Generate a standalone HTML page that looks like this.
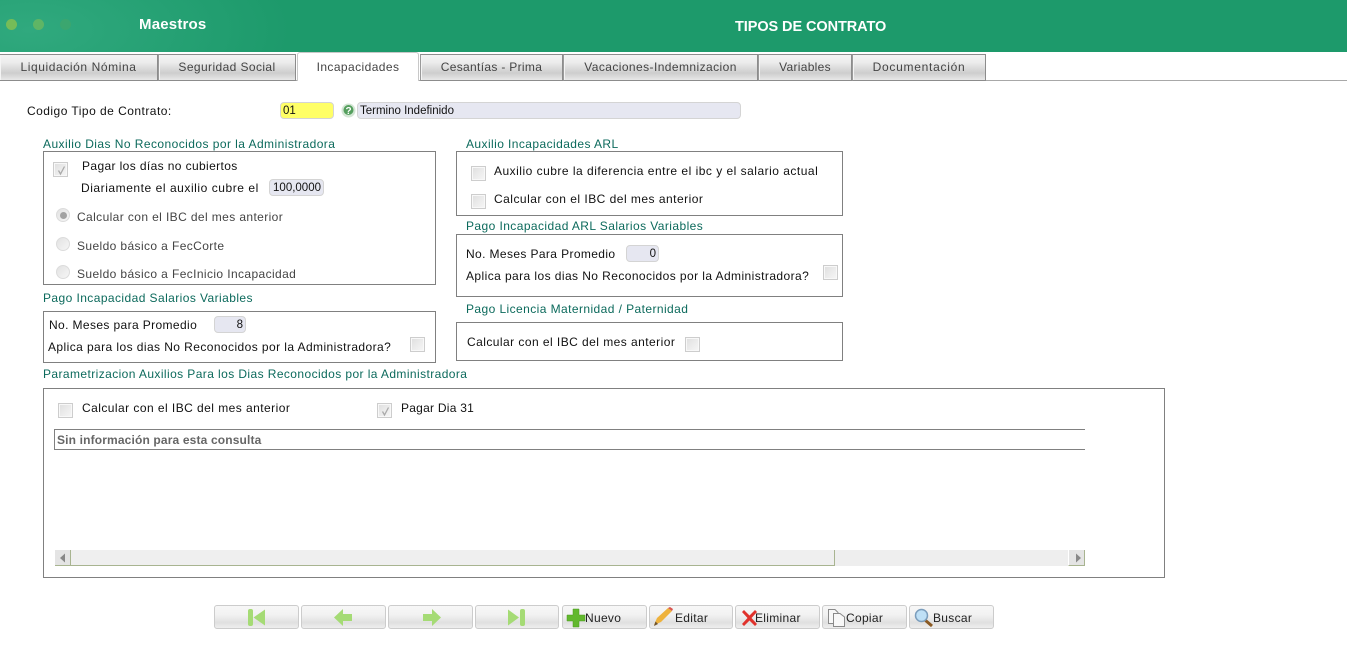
<!DOCTYPE html>
<html lang="es"><head><meta charset="utf-8"><title>Tipos de Contrato</title>
<style>
html,body{margin:0;padding:0;background:#fff;width:1347px;height:648px;overflow:hidden}
body{font-family:"Liberation Sans",sans-serif;font-size:12px;color:#111;position:relative}
.a,.t,.h,.box,.cb,.rd,.in,.tab,.btn{position:absolute;box-sizing:border-box}
.t{white-space:nowrap;letter-spacing:.42px;line-height:14px}
.h{white-space:nowrap;letter-spacing:.42px;line-height:14px;color:#0c6a5c}
.g{color:#444}
.box{border:1px solid #808080;background:#fff}
.cb{width:15px;height:15px;border:1px solid #cdcdcd;background:linear-gradient(135deg,#dedede,#f7f7f7);box-shadow:inset 0 0 0 1px #f8f8f8}
.cb svg{position:absolute;left:2px;top:2px}
.rd{width:14px;height:14px;border-radius:50%;border:1px solid #dcdcdc;background:linear-gradient(135deg,#e2e2e2,#f6f6f6)}
.rd i{position:absolute;left:2.500px;top:2.500px;width:7px;height:7px;border-radius:50%;background:#a2a2a2}
.in{height:17px;border:1px solid #d4d4d4;border-radius:4px;background:#e6e7f1;font-size:11.5px;line-height:17px;padding:0 2px;text-align:right;white-space:nowrap}
.tab{top:54px;height:27px;border:1px solid #8c8c8c;border-left:1px solid #9a9a9a;box-shadow:inset 1px 0 0 #f4f4f4;background:linear-gradient(#f4f4f4 0,#ececec 30%,#cdcdcd 72%,#e8e8e8 100%);text-align:center;line-height:24px;color:#444;letter-spacing:.42px;white-space:nowrap}
.tab.on{top:52px;height:29px;background:#fff;border:1px solid #c8c8c8;border-bottom:none;border-radius:3px 3px 0 0;line-height:28px;box-shadow:none}
.btn{top:605px;height:24px;border:1px solid #cccccc;border-radius:3px;background:linear-gradient(#f7f7f7 0,#f2f2f2 40%,#e0e0e0 75%,#eeeeee 100%);line-height:24px;font-size:12px;letter-spacing:.3px;white-space:nowrap;color:#222}
.btn svg{position:absolute;left:0;top:0}
.btn span{position:absolute;top:0}
</style></head><body>

<div class="a" style="left:0;top:0;width:1347px;height:52px;background:radial-gradient(ellipse 260px 110px at 30px 30px,#30a97e 0,#1d9a6b 100%),#1d9a6b"></div>
<div class="a" style="left:6px;top:19px;width:11px;height:11px;border-radius:50%;background:#76bc58"></div>
<div class="a" style="left:33px;top:19px;width:11px;height:11px;border-radius:50%;background:#5fb565"></div>
<div class="a" style="left:60px;top:19px;width:11px;height:11px;border-radius:50%;background:#3ba66f"></div>
<div class="t" style="left:139px;top:18px;color:#fff;font-weight:bold;font-size:15px;letter-spacing:.2px">Maestros</div>
<div class="t" style="left:735px;top:20px;color:#fff;font-weight:bold;font-size:14.5px;letter-spacing:-.08px">TIPOS DE CONTRATO</div>

<div class="a" style="left:0;top:80px;width:1347px;height:1px;background:#a8a8a8"></div>
<div class="tab" style="left:-1px;width:159px;letter-spacing:.59px">Liquidación Nómina</div>
<div class="tab" style="left:158px;width:138px;letter-spacing:.4px">Seguridad Social</div>
<div class="tab on" style="left:297px;width:122px">Incapacidades</div>
<div class="tab" style="left:420px;width:143px;letter-spacing:.32px">Cesantías - Prima</div>
<div class="tab" style="left:563px;width:195px">Vacaciones-Indemnizacion</div>
<div class="tab" style="left:758px;width:94px;letter-spacing:.3px">Variables</div>
<div class="tab" style="left:852px;width:134px;letter-spacing:.72px">Documentación</div>

<div class="t" style="left:27px;top:104px;letter-spacing:.47px">Codigo Tipo de Contrato:</div>
<div class="in" style="left:280px;top:102px;width:54px;background:#ffff66;text-align:left">01</div>
<svg class="a" style="left:341px;top:103px" width="15" height="15" viewBox="0 0 15 15"><circle cx="7.500" cy="7.500" r="7" fill="#d4e6d5"/><circle cx="7.500" cy="7" r="5" fill="#559f5e"/><text x="7.500" y="11" font-size="10" font-weight="bold" fill="#fff" text-anchor="middle" font-family="Liberation Sans">?</text></svg>
<div class="in" style="left:357px;top:102px;width:384px;text-align:left">Termino Indefinido</div>

<!-- Left column -->
<div class="h" style="left:43px;top:137px;letter-spacing:.44px">Auxilio Dias No Reconocidos por la Administradora</div>
<div class="box" style="left:43px;top:151px;width:393px;height:134px"></div>
<div class="cb" style="left:53px;top:162px"><svg width="11" height="11" viewBox="0 0 11 11"><path d="M2.500 5.500L4.500 9 8.500 1.500" fill="none" stroke="#aaa" stroke-width="1.300"/></svg></div>
<div class="t" style="left:82px;top:159px;letter-spacing:.38px">Pagar los días no cubiertos</div>
<div class="t" style="left:81px;top:181px;letter-spacing:.55px">Diariamente el auxilio cubre el</div>
<div class="in" style="left:269px;top:179px;width:55px">100,0000</div>
<div class="rd" style="left:56px;top:208px"><i></i></div>
<div class="t g" style="left:77px;top:210px;letter-spacing:.39px">Calcular con el IBC del mes anterior</div>
<div class="rd" style="left:56px;top:237px"></div>
<div class="t g" style="left:77px;top:239px;letter-spacing:.39px">Sueldo básico a FecCorte</div>
<div class="rd" style="left:56px;top:265px"></div>
<div class="t g" style="left:77px;top:267px;letter-spacing:.39px">Sueldo básico a FecInicio Incapacidad</div>

<div class="h" style="left:43px;top:291px">Pago Incapacidad Salarios Variables</div>
<div class="box" style="left:43px;top:311px;width:393px;height:52px"></div>
<div class="t" style="left:49px;top:318px;letter-spacing:.38px">No. Meses para Promedio</div>
<div class="in" style="left:214px;top:316px;width:32px">8</div>
<div class="t" style="left:48px;top:340px">Aplica para los dias No Reconocidos por la Administradora?</div>
<div class="cb" style="left:410px;top:337px"></div>

<!-- Right column -->
<div class="h" style="left:466px;top:137px">Auxilio Incapacidades ARL</div>
<div class="box" style="left:456px;top:151px;width:387px;height:65px"></div>
<div class="cb" style="left:471px;top:166px"></div>
<div class="t" style="left:494px;top:164px;letter-spacing:.49px">Auxilio cubre la diferencia entre el ibc y el salario actual</div>
<div class="cb" style="left:471px;top:194px"></div>
<div class="t" style="left:494px;top:192px;letter-spacing:.48px">Calcular con el IBC del mes anterior</div>

<div class="h" style="left:466px;top:219px">Pago Incapacidad ARL Salarios Variables</div>
<div class="box" style="left:456px;top:234px;width:387px;height:63px"></div>
<div class="t" style="left:466px;top:247px;letter-spacing:.38px">No. Meses Para Promedio</div>
<div class="in" style="left:626px;top:245px;width:33px">0</div>
<div class="t" style="left:466px;top:269px">Aplica para los dias No Reconocidos por la Administradora?</div>
<div class="cb" style="left:823px;top:265px"></div>

<div class="h" style="left:466px;top:302px">Pago Licencia Maternidad / Paternidad</div>
<div class="box" style="left:456px;top:322px;width:387px;height:39px"></div>
<div class="t" style="left:467px;top:335px;letter-spacing:.45px">Calcular con el IBC del mes anterior</div>
<div class="cb" style="left:685px;top:337px"></div>

<!-- Bottom panel -->
<div class="h" style="left:43px;top:367px;letter-spacing:.41px">Parametrizacion Auxilios Para los Dias Reconocidos por la Administradora</div>
<div class="box" style="left:43px;top:388px;width:1122px;height:190px"></div>
<div class="cb" style="left:58px;top:403px"></div>
<div class="t" style="left:82px;top:401px;letter-spacing:.45px">Calcular con el IBC del mes anterior</div>
<div class="cb" style="left:377px;top:403px"><svg width="11" height="11" viewBox="0 0 11 11"><path d="M2.500 5.500L4.500 9 8.500 1.500" fill="none" stroke="#aaa" stroke-width="1.300"/></svg></div>
<div class="t" style="left:401px;top:401px;letter-spacing:.25px">Pagar Dia 31</div>

<div class="a" style="left:54px;top:429px;width:1031px;height:21px;border:1px solid #808080;border-right:none"></div>
<div class="t" style="left:57px;top:433px;color:#666;font-weight:bold;letter-spacing:.15px">Sin información para esta consulta</div>

<div class="a" style="left:55px;top:550px;width:1030px;height:16px;background:#eeeeee"></div>
<div class="a" style="left:55px;top:550px;width:16px;height:16px;background:#e4e4e4;border-right:1px solid #a8b490;border-bottom:1px solid #a8b490"></div>
<div class="a" style="left:71px;top:550px;width:764px;height:16px;background:#efefef;border-right:1px solid #a8b490;border-bottom:1px solid #a8b490"></div>
<div class="a" style="left:1068px;top:550px;width:17px;height:16px;background:#e4e4e4;border-right:1px solid #a8b490;border-bottom:1px solid #a8b490;border-left:1px solid #fff"></div>
<svg class="a" style="left:59px;top:553px" width="8" height="10" viewBox="0 0 8 10"><path d="M6 0.500V9.500L1 5Z" fill="#888"/></svg>
<svg class="a" style="left:1074px;top:553px" width="8" height="10" viewBox="0 0 8 10"><path d="M2 0.500V9.500L7 5Z" fill="#888"/></svg>

<!-- Toolbar -->
<div class="btn" style="left:214px;width:85px"><svg width="85" height="24"><rect x="33" y="3" width="5" height="17" rx="2" fill="#a5db75"/><path d="M38.500 11.500L50 3.500V19.500Z" fill="#a5db75"/></svg></div>
<div class="btn" style="left:301px;width:85px"><svg width="85" height="24"><path d="M32 11.500L41 3V8H50V15H41V20Z" fill="#a5db75"/></svg></div>
<div class="btn" style="left:388px;width:85px"><svg width="85" height="24"><path d="M52 11.500L43 3V8H34V15H43V20Z" fill="#a5db75"/></svg></div>
<div class="btn" style="left:475px;width:84px"><svg width="84" height="24"><path d="M32 3.500L43 11.500 32 19.500Z" fill="#a5db75"/><rect x="44" y="3" width="5" height="17" rx="2" fill="#a5db75"/></svg></div>
<div class="btn" style="left:562px;width:85px"><svg width="85" height="24"><path d="M10 3H16V9H22V15H16V21H10V15H4V9H10Z" fill="#62b82e" stroke="#4c9a20" stroke-width=".5"/></svg><span style="left:22px">Nuevo</span></div>
<div class="btn" style="left:649px;width:84px"><svg width="84" height="24"><path d="M4 19L7 12 18 2 22 5 11 16Z" fill="#eeb23c"/><path d="M18 2L20 1 23 3 22 5Z" fill="#d9534f"/><path d="M4 20L5.500 15.500 8 18Z" fill="#6d5330"/></svg><span style="left:25px">Editar</span></div>
<div class="btn" style="left:735px;width:85px"><svg width="85" height="24"><path d="M8 4L13.500 9.500 19 4 21 6 15.500 12 21 18 19 20 13.500 14.500 8 20 6 18 11.500 12 6 6Z" fill="#e0322c"/></svg><span style="left:19px">Eliminar</span></div>
<div class="btn" style="left:822px;width:85px"><svg width="85" height="24" fill="#f8f8f8" stroke="#8a8a8a"><path d="M5.500 3.500H12L15 6.500V17.500H5.500Z"/><path d="M10.500 7.500H17L21.500 11V20.500H10.500Z"/></svg><span style="left:23px">Copiar</span></div>
<div class="btn" style="left:909px;width:85px"><svg width="85" height="24"><path d="M15 14L22 20" stroke="#8a5a24" stroke-width="3"/><circle cx="11.500" cy="9.500" r="6" fill="#bfe0f6" stroke="#7b9dbc" stroke-width="1.500"/></svg><span style="left:23px">Buscar</span></div>

</body></html>
